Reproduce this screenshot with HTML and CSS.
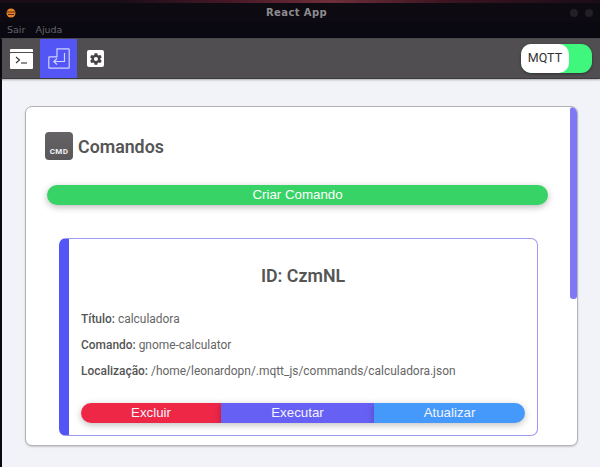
FILE: index.html
```html
<!DOCTYPE html>
<html lang="pt">
<head>
<meta charset="utf-8">
<title>React App</title>
<link rel="stylesheet" href="styles.css">
</head>
<body>
<div class="window">
  <div class="wallpaper"></div>
  <header class="titlebar">
    <svg class="app-icon" width="10" height="10" viewBox="0 0 10 10"><circle cx="5" cy="5" r="4.500" fill="#e8842c"/><path d="M1 4h8M2 6.500h6" stroke="#5a2a10" stroke-width="1"/></svg>
    <span class="title">React App</span>
    <span class="controls"><i class="dot"></i><i class="dot"></i></span>
  </header>
  <nav class="menu"><span>Sair</span><span>Ajuda</span></nav>
  <div class="toolbar">
    <div class="tab">
      <svg width="23" height="20" viewBox="0 0 23 20"><path fill="#fff" d="M0 1a1 1 0 0 1 1-1h21a1 1 0 0 1 1 1v2H0z"/><rect y="4" width="23" height="16" rx="1" fill="#fff"/><path d="M6 8l3.500 3L6 14" fill="none" stroke="#333" stroke-width="1.100"/><path d="M11 14h6" stroke="#333" stroke-width="1.100"/></svg>
    </div>
    <div class="tab tab-active">
      <svg width="22" height="21" viewBox="0 0 22 21" fill="none" stroke="#cfd3ff" stroke-width="1.200"><path d="M9 .8h11.500a.7.7 0 0 1 .7.7v18a.7.7 0 0 1-.7.7H1.500a.7.7 0 0 1-.7-.7V9.500a.7.7 0 0 1 .7-.7H9z"/><path d="M16.500 5v8.500H6"/><path d="M9 10.500l-3.200 3 3.200 3"/></svg>
    </div>
    <div class="tab">
      <span class="gear-box">
        <svg width="14" height="14" viewBox="0 0 24 24"><path fill="#444" fill-rule="evenodd" d="M19.400 13c.04-.33.06-.66.06-1s-.02-.67-.06-1l2.100-1.650a.5.500 0 0 0 .12-.64l-2-3.460a.5.500 0 0 0-.61-.22l-2.490 1a7.300 7.300 0 0 0-1.730-1l-.38-2.650A.5.500 0 0 0 13.900 2h-4a.5.500 0 0 0-.49.42l-.38 2.650a7.700 7.700 0 0 0-1.730 1l-2.490-1a.5.500 0 0 0-.61.22l-2 3.460a.5.500 0 0 0 .12.64L4.420 11c-.04.33-.07.67-.07 1s.03.67.07 1l-2.100 1.650a.5.500 0 0 0-.12.64l2 3.460c.12.22.39.3.61.22l2.490-1c.52.4 1.100.74 1.730 1l.38 2.650c.04.24.25.42.49.42h4c.25 0 .45-.18.49-.42l.38-2.650c.63-.26 1.200-.6 1.730-1l2.490 1c.22.08.49 0 .61-.22l2-3.460a.5.500 0 0 0-.12-.64zM11.900 15.500a3.500 3.500 0 1 1 0-7 3.500 3.500 0 0 1 0 7z"/></svg>
      </span>
    </div>
    <div class="toggle"><span class="toggle-knob">MQTT</span></div>
  </div>
  <main class="content">
    <section class="panel">
      <i class="scrollbar"></i>
      <div class="heading">
        <span class="cmd-icon">CMD</span>
        <h1>Comandos</h1>
      </div>
      <button class="btn-create">Criar Comando</button>
      <article class="card">
        <h2>ID: CzmNL</h2>
        <p><b>Título:</b> calculadora</p>
        <p><b>Comando:</b> gnome-calculator</p>
        <p><b>Localização:</b> /home/leonardopn/.mqtt_js/commands/calculadora.json</p>
        <div class="actions">
          <button class="act act-del">Excluir</button>
          <button class="act act-run">Executar</button>
          <button class="act act-upd">Atualizar</button>
        </div>
      </article>
    </section>
  </main>
</div>
</body>
</html>
```
FILE: styles.css
```css
* { box-sizing: border-box; }
html, body { margin: 0; padding: 0; }
body { width: 600px; height: 467px; overflow: hidden; font-family: Roboto, sans-serif; background: #f2f3f8; }
.window { display: flex; flex-direction: column; height: 467px; }
.wallpaper { height: 3px; background: linear-gradient(90deg, #1a0d18 0 20%, #4a1a28 40%, #6e2f3a 55%, #3a1420 75%, #1a0d18 100%); }
.titlebar { height: 19px; background: #0d0a12; display: flex; align-items: center; position: relative; padding: 0 4px 0 6px; }
.app-icon { flex: none; }
.title { position: absolute; left: 266px; top: 3px; font: bold 10px/14px "DejaVu Sans", sans-serif; letter-spacing: .4px; color: #8d8c8f; }
.controls { margin-left: auto; display: flex; gap: 7px; padding-right: 3px; }
.dot { width: 8px; height: 8px; border-radius: 50%; background: #222027; }
.menu { height: 16px; background: #0a0811; display: flex; gap: 10px; padding: 1px 0 0 7px; font: 9.500px/14px "DejaVu Sans", sans-serif; color: #66656a; }
.toolbar { height: 41px; background: #504e50; border-top: 1px solid #4a484a; border-bottom: 1px solid #3b3a3c; border-left: 2px solid #0a0811; display: flex; align-items: stretch; padding-left: 1px; box-shadow: 0 1px 2px rgba(0,0,0,.3); position: relative; }
.tab { width: 37px; display: flex; align-items: center; justify-content: center; }
.tab-active { background: #5355f5; }
.gear-box { width: 17px; height: 17px; background: #fff; border-radius: 2px; display: flex; align-items: center; justify-content: center; }
.toggle { margin: 5px 8px 6px auto; width: 71px; height: 29px; border-radius: 11px; background: #3ef77c; box-shadow: 0 1px 3px rgba(0,0,0,.4); }
.toggle-knob { display: block; width: 48px; height: 29px; background: #fff; border-radius: 10px; font-size: 12.500px; line-height: 28px; text-align: center; color: #333; }
.content { flex: 1; min-height: 0; padding: 27px 22px 21px 23px; border-left: 2px solid #0a0811; }
.panel { position: relative; height: 340px; background: #fff; border: 1px solid #b4b4b8; border-radius: 7px; padding: 25px 29px 0 19px; overflow: hidden; box-shadow: 0 1px 2px rgba(0,0,0,.18); }
.scrollbar { position: absolute; top: 0; right: 0; width: 7px; height: 192px; background: #7f78f6; border-radius: 3px; }
.heading { display: flex; align-items: center; gap: 5px; height: 28px; }
.cmd-icon { width: 28px; height: 28px; border-radius: 4px; background: linear-gradient(#656366, #59575a); color: #f2f2f2; font-size: 8px; font-weight: 700; text-align: center; line-height: 9px; padding-top: 15px; letter-spacing: .3px; }
h1 { margin: 0; font-size: 17.800px; font-weight: 600; color: #555; }
.btn-create { display: block; width: 501px; height: 20px; margin: 25px 0 0 2px; border: 0; border-radius: 10px; background: #38d366; color: #fff; font: 13.300px/20px "Liberation Sans", sans-serif; padding: 0; box-shadow: 0 2px 7px rgba(0,0,0,.28); }
.card { width: 479px; height: 198px; margin: 33px 0 0 14px; background: #fff; border: 1px solid #9c98f3; border-left: 10px solid #5355f5; border-radius: 7px; padding: 26px 12px 0 12px; color: #555; }
h2 { margin: 0 0 25px; text-align: center; font-size: 17.800px; line-height: 22px; font-weight: 600; color: #555; }
p { margin: 0 0 12px; font-size: 11.950px; line-height: 14px; color: #666; }
b { font-weight: 500; color: #555; }
.actions { display: flex; margin-top: 25px; width: 444px; }
.act { height: 20px; border: 0; padding: 0; color: #f4f4ff; font: 13.300px/20px "Liberation Sans", sans-serif; box-shadow: 0 2px 7px rgba(0,0,0,.25); }
.act-del { flex: 0 0 140px; background: #ee2747; border-radius: 10px 0 0 10px; }
.act-run { flex: 0 0 153px; background: #6760f4; }
.act-upd { flex: 0 0 151px; background: #4599fb; border-radius: 0 10px 10px 0; }
```
